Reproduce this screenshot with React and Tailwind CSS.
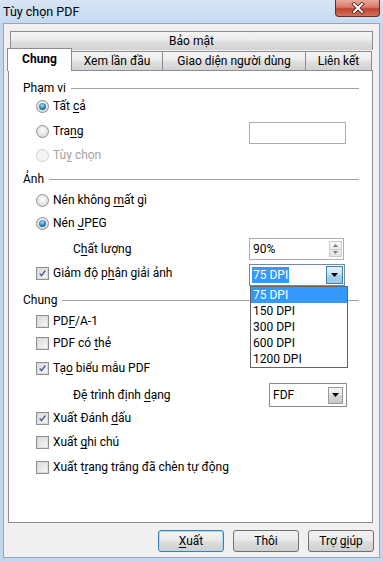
import React from "react";

const U = ({ children }) => (
  <span className="underline underline-offset-[2px] decoration-[1px]">{children}</span>
);

function Radio({ checked, disabled }) {
  if (disabled) {
    return (
      <span className="w-[13px] h-[13px] rounded-full border border-[#cfcfcf] bg-[#f4f4f4] shrink-0" />
    );
  }
  return (
    <span className="w-[13px] h-[13px] rounded-full border border-[#8e8f8f] bg-[radial-gradient(circle_at_50%_40%,#ffffff,#e2e2e2_60%,#c9c9c9)] flex items-center justify-center shrink-0">
      {checked && (
        <span className="w-[7px] h-[7px] rounded-full bg-[radial-gradient(circle_at_45%_35%,#9fe2fb,#2b7bb3_55%,#0f3f6a)]" />
      )}
    </span>
  );
}

function Check({ checked }) {
  return (
    <span className="w-[13px] h-[13px] border border-[#8e8f8f] bg-white flex items-center justify-center shrink-0">
      <span className="w-[11px] h-[11px] border border-[#dcdcdc] bg-[linear-gradient(135deg,#dcdcdc,#f6f6f6)] flex items-center justify-center">
        {checked && (
          <svg width="11" height="11" viewBox="0 0 11 11">
            <path d="M2 5.5 L4.3 8 L9 1.8" fill="none" stroke="#4a5f97" strokeWidth="1.7" />
          </svg>
        )}
      </span>
    </span>
  );
}

function GroupLabel({ children, className }) {
  return (
    <div className={`flex items-center h-[18px] pl-[14px] pr-[13px] gap-[5px] ${className}`}>
      <span>{children}</span>
      <span className="flex-1 h-px bg-[#a0a4aa]" />
    </div>
  );
}

function RadioRow({ checked, disabled, children, className }) {
  return (
    <div className={`flex items-center h-[18px] pl-[27px] ${className}`}>
      <Radio checked={checked} disabled={disabled} />
      <span className={`ml-[4px] ${disabled ? "text-[#a3a3a3]" : ""}`}>{children}</span>
    </div>
  );
}

function CheckRow({ checked, children, className }) {
  return (
    <div className={`flex items-center h-[18px] pl-[27px] ${className}`}>
      <Check checked={checked} />
      <span className="ml-[4px]">{children}</span>
    </div>
  );
}

function Triangle() {
  return (
    <svg width="7" height="4" viewBox="0 0 7 4">
      <path d="M0 0 L7 0 L3.5 4 Z" fill="#000" />
    </svg>
  );
}

const tabBg =
  "bg-[linear-gradient(#f4f4f4,#ececec_45%,#dedede_55%,#d2d2d2)] border border-[#898c95] border-b-0";

const btnBg =
  "bg-[linear-gradient(#f2f2f2,#ebebeb_45%,#dddddd_55%,#cfcfcf)] rounded-[3px] flex items-center justify-center";

export default function App() {
  return (
    <div className="w-[383px] h-[562px] flex flex-col bg-[#c3d6ee] font-['Roboto',sans-serif] text-[12px] leading-none text-black overflow-hidden">
      {/* Title bar */}
      <div className="h-[23px] flex items-start justify-between bg-[linear-gradient(#d6e4f4,#c6d9ef)]">
        <span className="pl-[3px] pt-[6px] text-[12.5px]">Tùy chọn PDF</span>
        <div className="mr-[3px] w-[45px] h-[17px] rounded-b-[4px] border border-t-0 border-[#6b2b24] bg-[linear-gradient(#e7a99c,#d67a68_45%,#c2432f_55%,#d5705a)] flex items-center justify-center">
          <svg width="14" height="12" viewBox="0 0 14 12">
            <path d="M3 2 L11 10 M11 2 L3 10" stroke="#4a1a14" strokeWidth="3.6" strokeLinecap="square" />
            <path d="M3 2 L11 10 M11 2 L3 10" stroke="#ffffff" strokeWidth="2" strokeLinecap="square" />
          </svg>
        </div>
      </div>

      {/* Client area */}
      <div className="flex-1 mx-[3px] mb-[4px] border border-[#8fa5c1] bg-[#f0f0f0] flex flex-col">
        <div className="pt-[7px] pl-[4px] pr-[6px] flex flex-col">
          {/* Back tab row */}
          <div className={`ml-[2px] h-[19px] ${tabBg} flex items-center justify-center`}>
            Bảo mật
          </div>
          {/* Front tab row */}
          <div className="flex items-end h-[20px]">
            <div className="-ml-[1px] w-[65px] h-[23px] -mb-[1px] relative z-10 bg-white border border-b-0 border-[#898c95] flex items-center justify-center font-bold pb-[2px]">
              Chung
            </div>
            <div className={`-ml-[1px] w-[92px] h-[19px] ${tabBg} flex items-center justify-center`}>
              Xem lần đầu
            </div>
            <div className={`-ml-[1px] w-[144px] h-[19px] ${tabBg} flex items-center justify-center`}>
              Giao diện người dùng
            </div>
            <div className={`-ml-[1px] w-[67px] h-[19px] ${tabBg} flex items-center justify-center`}>
              Liên kết
            </div>
          </div>

          {/* Panel */}
          <div className="h-[453px] border border-[#898c95] bg-white flex flex-col">
            <GroupLabel className="mt-[8px]">Phạm vi</GroupLabel>
            <RadioRow checked className="mt-0">
              Tất <U>c</U>ả
            </RadioRow>
            <div className="flex items-start h-[24px] pl-[27px] mt-[5px]">
              <div className="w-[213px] h-[22px] flex items-center">
                <Radio />
                <span className="ml-[4px]">
                  Tra<U>n</U>g
                </span>
              </div>
              <div className="mt-[2px] w-[97px] h-[22px] border border-[#a9aeb6] bg-white" />
            </div>
            <RadioRow disabled className="mt-[2px]">
              Tù<U>y</U> chọn
            </RadioRow>

            <GroupLabel className="mt-[6px]">Ảnh</GroupLabel>
            <RadioRow className="mt-[3px]">
              Nén không <U>m</U>ất gì
            </RadioRow>
            <RadioRow checked className="mt-[5px]">
              Nén <U>J</U>PEG
            </RadioRow>
            <div className="flex items-center h-[22px] pl-[64px] mt-[6px]">
              <span className="w-[176px]">
                C<U>h</U>ất lượng
              </span>
              <div className="w-[95px] h-[22px] border border-[#a9aeb6] bg-white flex items-center">
                <span className="flex-1 pl-[3px]">90%</span>
                <div className="mr-[1px] w-[13px] h-[16px] flex flex-col border border-[#c9ccd1] bg-[linear-gradient(#f7f7f7,#e4e4e4)]">
                  <div className="flex-1 flex items-center justify-center border-b border-[#c9ccd1]">
                    <svg width="5" height="3" viewBox="0 0 5 3">
                      <path d="M0 3 L5 3 L2.5 0 Z" fill="#6d7b8c" />
                    </svg>
                  </div>
                  <div className="flex-1 flex items-center justify-center">
                    <svg width="5" height="3" viewBox="0 0 5 3">
                      <path d="M0 0 L5 0 L2.5 3 Z" fill="#6d7b8c" />
                    </svg>
                  </div>
                </div>
              </div>
            </div>
            <div className="flex items-start h-[22px] pl-[27px] mt-[4px]">
              <div className="w-[213px] h-[18px] flex items-center">
                <Check checked />
                <span className="ml-[4px]">
                  Giảm độ p<U>h</U>ân giải ảnh
                </span>
              </div>
              <div className="relative z-20 w-[96px] h-[22px] border border-[#6f8aa6] bg-white flex items-center">
                <span className="flex-1 pl-[2px] flex">
                  <span className="bg-[#3399ff] text-white px-[1px] py-[2px]">75 DPI</span>
                </span>
                <div className="mr-[1px] w-[17px] h-[18px] border border-[#3c7fb1] bg-[linear-gradient(#e4f2fb,#c4e0f4_50%,#a7cfee_50%,#9cc8ea)] flex items-center justify-center">
                  <Triangle />
                </div>
                <div className="absolute left-0 top-[21px] w-[98px] border border-[#646464] bg-white flex flex-col">
                  <div className="h-[16px] pl-[2px] flex items-center bg-[#3399ff] text-white">75 DPI</div>
                  <div className="h-[16px] pl-[2px] flex items-center">150 DPI</div>
                  <div className="h-[16px] pl-[2px] flex items-center">300 DPI</div>
                  <div className="h-[16px] pl-[2px] flex items-center">600 DPI</div>
                  <div className="h-[16px] pl-[2px] flex items-center">1200 DPI</div>
                </div>
              </div>
            </div>

            <GroupLabel className="mt-[5px]">Chung</GroupLabel>
            <CheckRow className="mt-[3px]">
              PD<U>F</U>/A-1
            </CheckRow>
            <CheckRow className="mt-[4px]">
              PDF có <U>t</U>hẻ
            </CheckRow>
            <CheckRow checked className="mt-[7px]">
              Tạ<U>o</U> biểu mẫu PDF
            </CheckRow>
            <div className="flex items-center h-[24px] pl-[64px] mt-[6px]">
              <span className="w-[196px]">
                Đệ trình định <U>d</U>ạng
              </span>
              <div className="w-[78px] h-[24px] border border-[#8a8a8a] bg-white flex items-center">
                <span className="flex-1 pl-[3px]">FDF</span>
                <div className="mr-[3px] w-[15px] h-[17px] border border-[#9a9a9a] bg-[linear-gradient(#f3f3f3,#e6e6e6_50%,#d6d6d6_50%,#cacaca)] flex items-center justify-center">
                  <Triangle />
                </div>
              </div>
            </div>
            <CheckRow checked className="mt-[2px]">
              Xuất Đánh <U>d</U>ấu
            </CheckRow>
            <CheckRow className="mt-[6px]">
              Xuất <U>g</U>hi chú
            </CheckRow>
            <CheckRow className="mt-[7px]">
              Xuất t<U>r</U>ang trắng đã chèn tự động
            </CheckRow>
          </div>

          {/* Buttons */}
          <div className="mt-[7px] flex justify-end gap-[9px] pr-0 -mr-[1px]">
            <div className={`w-[66px] h-[22px] border border-[#3c7fb1] ${btnBg} shadow-[inset_0_0_0_1px_#a8dcf8]`}>
              <span>
                <U>X</U>uất
              </span>
            </div>
            <div className={`w-[66px] h-[22px] border border-[#707070] ${btnBg}`}>Thôi</div>
            <div className={`w-[66px] h-[22px] border border-[#707070] ${btnBg}`}>
              <span>
                Trợ g<U>i</U>úp
              </span>
            </div>
          </div>
        </div>
      </div>
    </div>
  );
}
